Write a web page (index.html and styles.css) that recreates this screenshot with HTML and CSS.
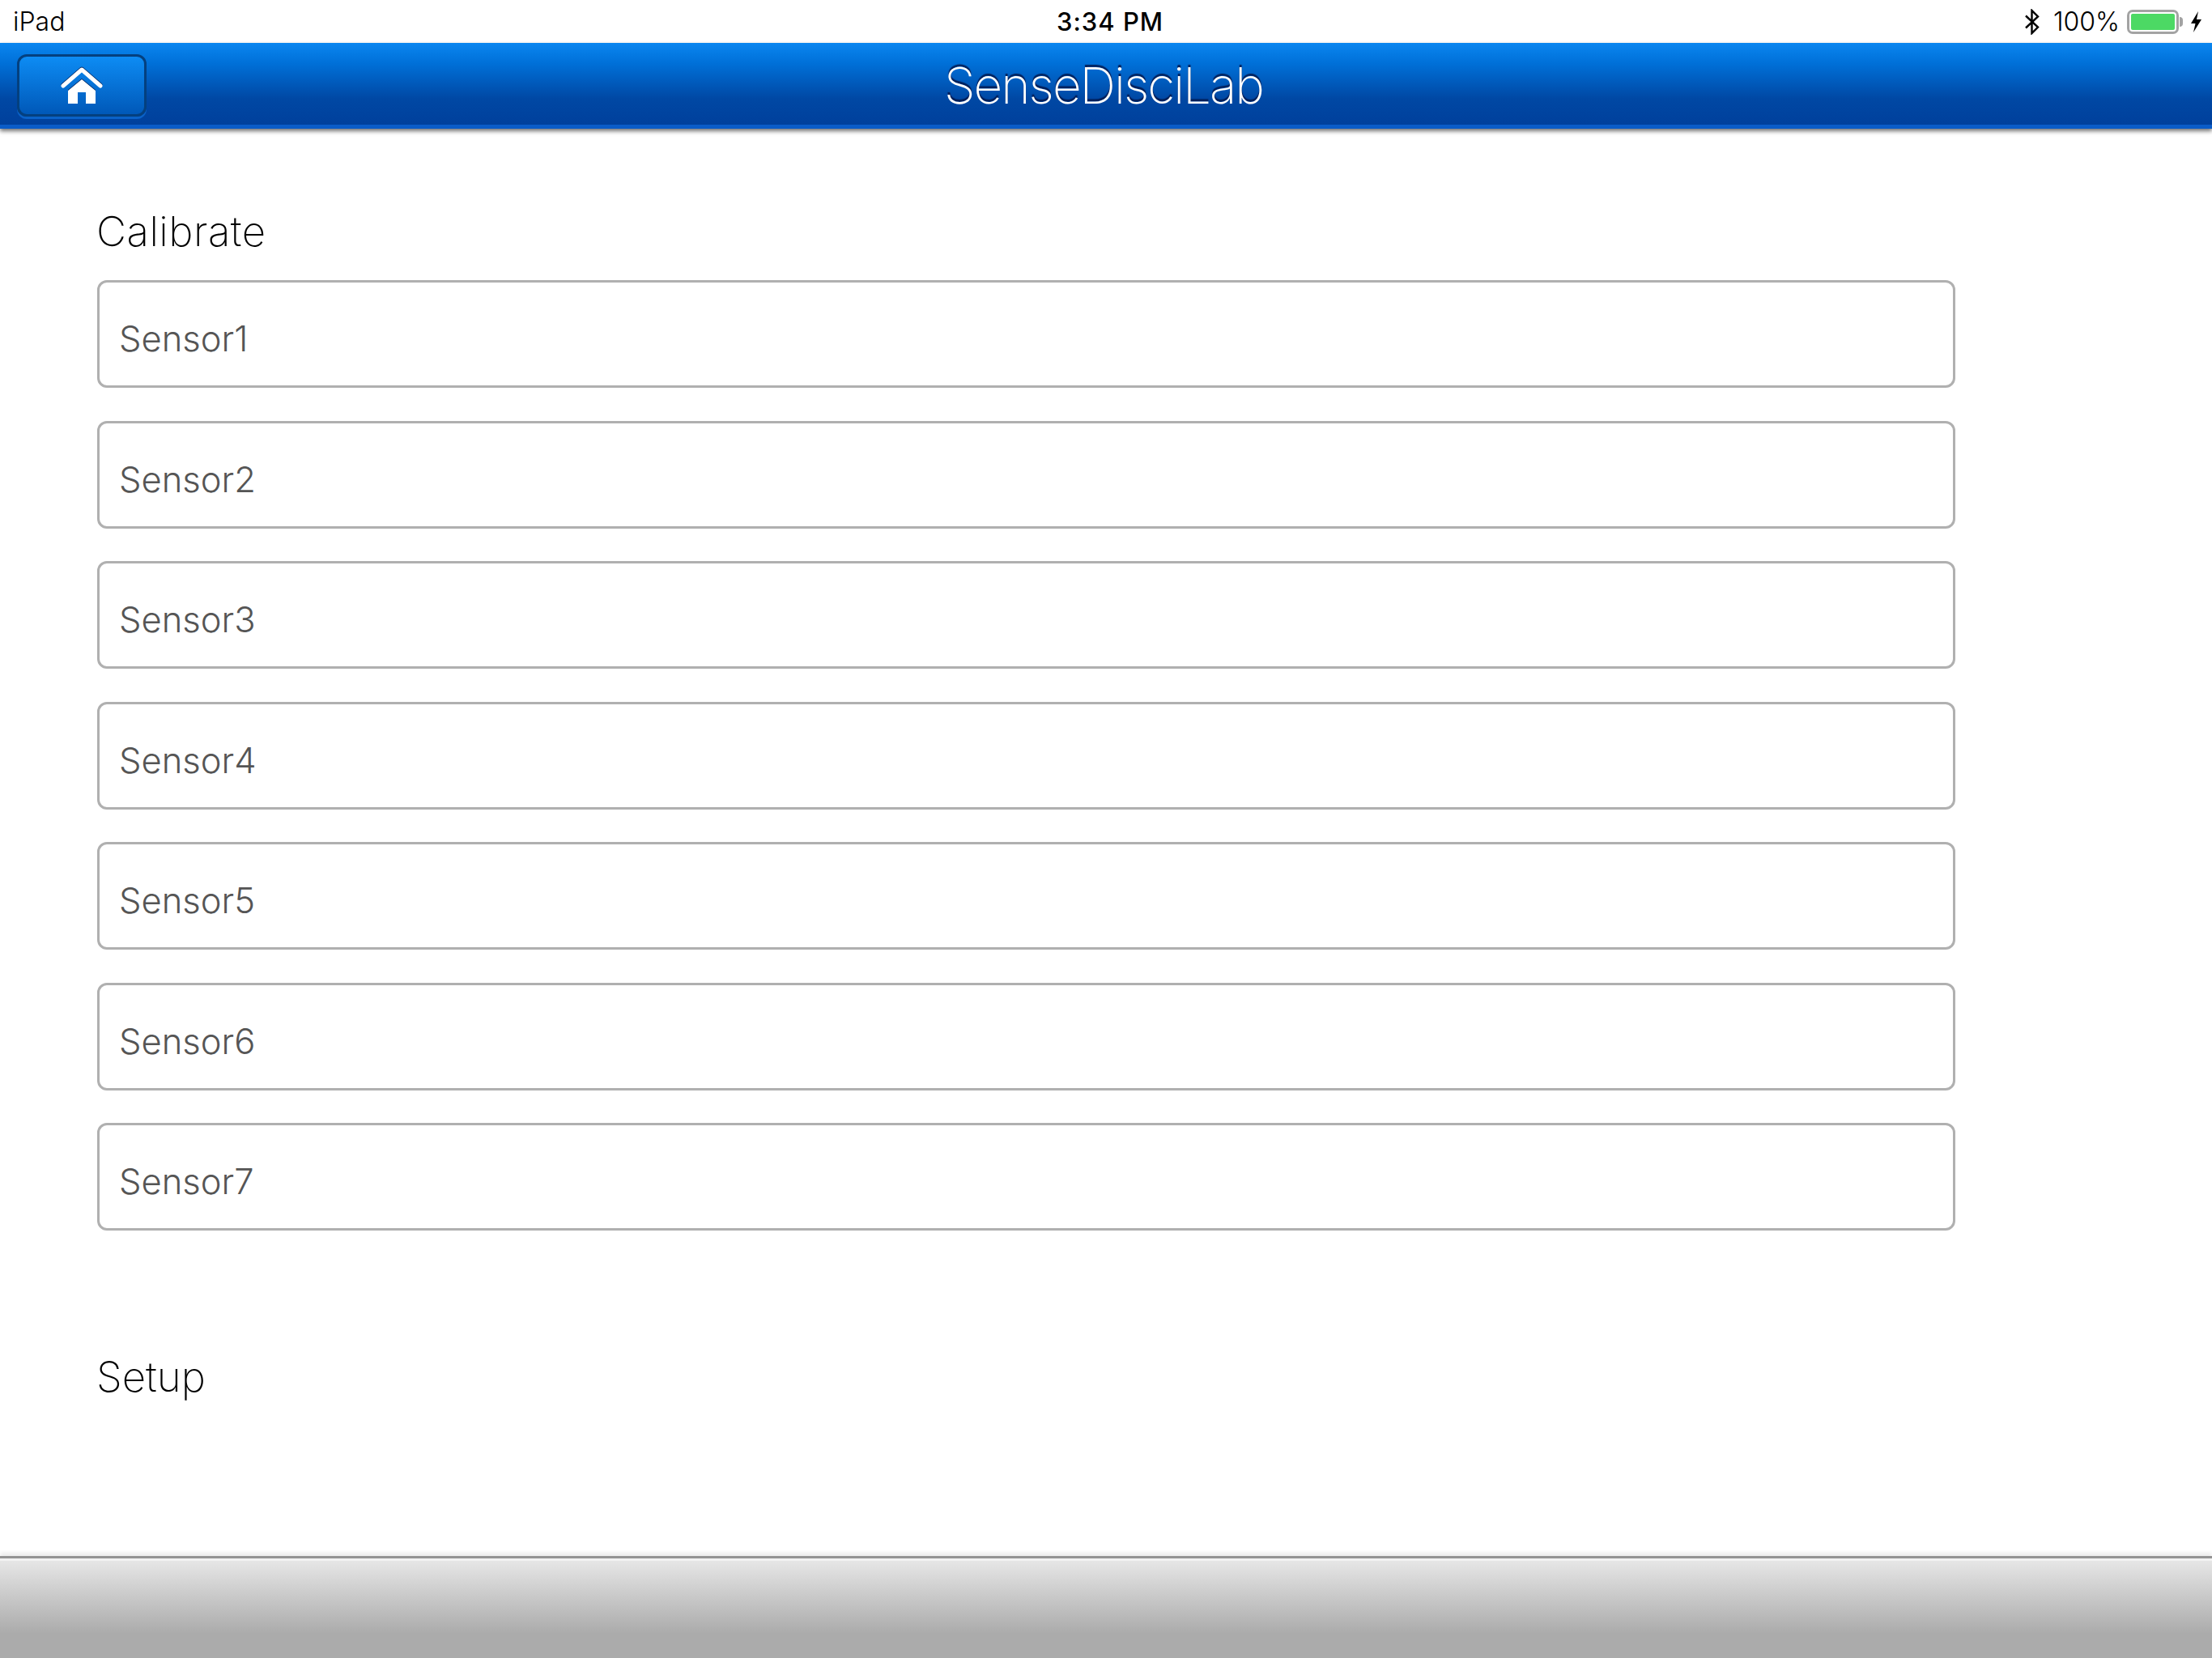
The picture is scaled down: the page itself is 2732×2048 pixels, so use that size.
FILE: index.html
```html
<!DOCTYPE html>
<html lang="en">
<head>
<meta charset="utf-8">
<title>SenseDisciLab</title>
<link rel="stylesheet" href="styles.css">
</head>
<body>
<div class="app">
  <div class="status">
    <span class="st-left">iPad</span>
    <span class="st-time">3:34 PM</span>
    <div class="st-right">
      <svg class="bt" width="20" height="32" viewBox="0 0 20 32"><path d="M2 8.5 L17 22.5 L9.5 30 V2 L17 9.5 L2 23.5" fill="none" stroke="#000" stroke-width="2.4"/></svg>
      <span class="pct">100%</span>
      <div class="batt"><div class="batt-body"><div class="batt-fill"></div></div><div class="batt-tip"></div></div>
      <svg class="bolt" width="15" height="26" viewBox="0 0 15 26"><path d="M10 0 L1 15 H6.5 L4 26 L14 10 H8 Z" fill="#000"/></svg>
    </div>
  </div>
  <header class="nav">
    <button class="home">
      <svg class="home-icon" width="52" height="46" viewBox="0 0 52 46"><path d="M3 23 L26 3 L49 23" fill="none" stroke="#fff" stroke-width="5" stroke-linecap="round" stroke-linejoin="round"/><path d="M26 15 L43 29 V45 H31 V31 H21 V45 H9 V29 Z" fill="#fff"/></svg>
    </button>
    <h1 class="nav-title">SenseDisciLab</h1>
  </header>
  <main class="content">
    <h2 class="section calibrate">Calibrate</h2>
    <div class="list">
      <div class="row">Sensor1</div>
      <div class="row">Sensor2</div>
      <div class="row">Sensor3</div>
      <div class="row">Sensor4</div>
      <div class="row">Sensor5</div>
      <div class="row">Sensor6</div>
      <div class="row">Sensor7</div>
    </div>
    <h2 class="section setup">Setup</h2>
  </main>
  <footer class="foot"></footer>
</div>
</body>
</html>
```
FILE: styles.css
```css
* { box-sizing: border-box; }
html, body { margin: 0; padding: 0; background: #fff; }
body { font-family: Inter, "Liberation Sans", sans-serif; color: #000; }
.app { width: 2732px; height: 2048px; display: flex; flex-direction: column; overflow: hidden; }

.status { height: 53px; flex: none; position: relative; display: flex; align-items: center; justify-content: space-between; padding: 0 12px 0 16px; font-size: 32px; font-weight: 300; }
.st-left { line-height: 1; }
.st-time { position: absolute; left: 1305px; top: 10px; font-size: 31px; font-weight: 500; line-height: 34px; letter-spacing: 1px; }
.st-right { display: flex; align-items: center; }
.bt { margin-right: 16px; }
.pct { margin-right: 9px; }
.batt { display: flex; align-items: center; }
.batt-body { width: 64px; height: 30px; border: 3px solid #a3a3a3; border-radius: 7px; padding: 2px; background: #fff; }
.batt-fill { width: 100%; height: 100%; background: #4cd964; border-radius: 2px; }
.batt-tip { width: 4px; height: 12px; background: #a3a3a3; border-radius: 0 4px 4px 0; margin-left: 1px; }
.bolt { margin-left: 9px; }

.nav { height: 106px; flex: none; position: relative; display: flex; align-items: center; justify-content: center; background: linear-gradient(#0a86f0 0, #0070d8 25%, #0048a4 68%, #00409c 100%); border-bottom: 5px solid #0a5cc8; box-shadow: 0 3px 5px rgba(0,0,0,.55); z-index: 1; }
.home { position: absolute; left: 21px; top: 14px; width: 160px; height: 77px; padding: 0; border: 3px solid #04407f; border-radius: 12px; background: linear-gradient(#0d8cf4, #0058b8); box-shadow: 0 3px 0 #0a62c8; display: flex; align-items: center; justify-content: center; }
.home-icon { filter: drop-shadow(0 -1px 0 rgba(0,20,70,.8)); }
.nav-title { margin: 5px 0 0 -6px; font-size: 62px; font-weight: 250; letter-spacing: -2px; color: #fff; line-height: 1; text-shadow: 0 -3px 1px rgba(0,20,70,.85); }

.content { flex: 1; padding: 0 0 0 120px; }
.section { margin: 0 0 0 -1px; font-weight: 250; font-size: 51px; line-height: 60px; }
.calibrate { margin-top: 97px; margin-bottom: 30px; letter-spacing: 0.5px; }
.list { width: 2295px; display: flex; flex-direction: column; gap: 40.5px; }
.row { height: 133px; border: 3px solid #b0b0b0; border-radius: 12px; padding: 11px 24px 0 24px; display: flex; align-items: center; font-size: 43.5px; font-weight: 350; color: #555; background: #fff; }
.setup { margin-top: 151px; }

.foot { height: 123px; flex: none; background: linear-gradient(#e6e6e6 0, #d6d6d6 20%, #ababab 75%, #ababab 100%); border-top: 3px solid #f2f2f2; box-shadow: 0 -3px 0 #949494, 0 -7px 5px rgba(0,0,0,.08); }
```
